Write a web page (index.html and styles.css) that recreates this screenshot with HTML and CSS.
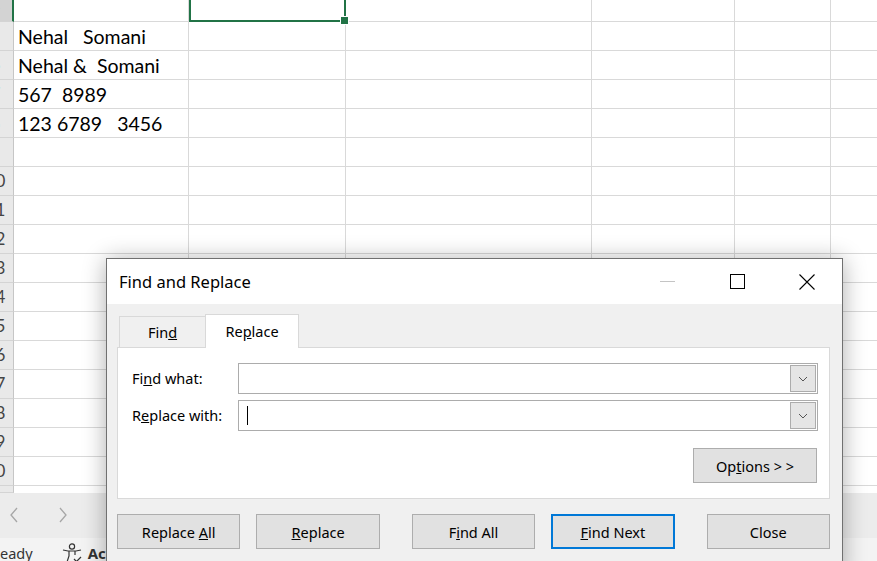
FILE: index.html
```html
<!DOCTYPE html>
<html lang="en">
<head>
    <meta charset="UTF-8" />
    <title>Find and Replace</title>
    <link rel="stylesheet" href="styles.css">
</head>
<body>
    <div class="sheet">
        <div class="row selected">
            <div class="rh">4</div><div class="c col-a"></div><div class="c col-b active-cell"></div><div class="c col-c"></div><div class="c col-d"></div><div class="c col-e"></div><div class="c col-f"></div>
        </div>
        <div class="row">
            <div class="rh">5</div><div class="c col-a">Nehal   Somani</div><div class="c col-b"></div><div class="c col-c"></div><div class="c col-d"></div><div class="c col-e"></div><div class="c col-f"></div>
        </div>
        <div class="row">
            <div class="rh">6</div><div class="c col-a">Nehal &amp;  Somani</div><div class="c col-b"></div><div class="c col-c"></div><div class="c col-d"></div><div class="c col-e"></div><div class="c col-f"></div>
        </div>
        <div class="row">
            <div class="rh">7</div><div class="c col-a">567  8989</div><div class="c col-b"></div><div class="c col-c"></div><div class="c col-d"></div><div class="c col-e"></div><div class="c col-f"></div>
        </div>
        <div class="row">
            <div class="rh">8</div><div class="c col-a">123 6789   3456</div><div class="c col-b"></div><div class="c col-c"></div><div class="c col-d"></div><div class="c col-e"></div><div class="c col-f"></div>
        </div>
        <div class="row">
            <div class="rh">9</div><div class="c col-a"></div><div class="c col-b"></div><div class="c col-c"></div><div class="c col-d"></div><div class="c col-e"></div><div class="c col-f"></div>
        </div>
        <div class="row">
            <div class="rh">10</div><div class="c col-a"></div><div class="c col-b"></div><div class="c col-c"></div><div class="c col-d"></div><div class="c col-e"></div><div class="c col-f"></div>
        </div>
        <div class="row">
            <div class="rh">11</div><div class="c col-a"></div><div class="c col-b"></div><div class="c col-c"></div><div class="c col-d"></div><div class="c col-e"></div><div class="c col-f"></div>
        </div>
        <div class="row">
            <div class="rh">12</div><div class="c col-a"></div><div class="c col-b"></div><div class="c col-c"></div><div class="c col-d"></div><div class="c col-e"></div><div class="c col-f"></div>
        </div>
        <div class="row">
            <div class="rh">13</div><div class="c col-a"></div><div class="c col-b"></div><div class="c col-c"></div><div class="c col-d"></div><div class="c col-e"></div><div class="c col-f"></div>
        </div>
        <div class="row">
            <div class="rh">14</div><div class="c col-a"></div><div class="c col-b"></div><div class="c col-c"></div><div class="c col-d"></div><div class="c col-e"></div><div class="c col-f"></div>
        </div>
        <div class="row">
            <div class="rh">15</div><div class="c col-a"></div><div class="c col-b"></div><div class="c col-c"></div><div class="c col-d"></div><div class="c col-e"></div><div class="c col-f"></div>
        </div>
        <div class="row">
            <div class="rh">16</div><div class="c col-a"></div><div class="c col-b"></div><div class="c col-c"></div><div class="c col-d"></div><div class="c col-e"></div><div class="c col-f"></div>
        </div>
        <div class="row">
            <div class="rh">17</div><div class="c col-a"></div><div class="c col-b"></div><div class="c col-c"></div><div class="c col-d"></div><div class="c col-e"></div><div class="c col-f"></div>
        </div>
        <div class="row">
            <div class="rh">18</div><div class="c col-a"></div><div class="c col-b"></div><div class="c col-c"></div><div class="c col-d"></div><div class="c col-e"></div><div class="c col-f"></div>
        </div>
        <div class="row">
            <div class="rh">19</div><div class="c col-a"></div><div class="c col-b"></div><div class="c col-c"></div><div class="c col-d"></div><div class="c col-e"></div><div class="c col-f"></div>
        </div>
        <div class="row">
            <div class="rh">20</div><div class="c col-a"></div><div class="c col-b"></div><div class="c col-c"></div><div class="c col-d"></div><div class="c col-e"></div><div class="c col-f"></div>
        </div>
        <div class="row partial">
            <div class="rh">21</div><div class="c col-a"></div><div class="c col-b"></div><div class="c col-c"></div><div class="c col-d"></div><div class="c col-e"></div><div class="c col-f"></div>
        </div>
    </div>

    <div class="sheet-tabs">
        <svg class="nav-arrow" width="10" height="16" viewBox="0 0 10 16"><path d="M8 1 L2 8 L8 15" fill="none" stroke="#a6a6a6" stroke-width="1.3"/></svg>
        <svg class="nav-arrow" width="10" height="16" viewBox="0 0 10 16"><path d="M2 1 L8 8 L2 15" fill="none" stroke="#a6a6a6" stroke-width="1.3"/></svg>
    </div>

    <div class="status-bar">
        <span class="status-text">Ready</span>
        <svg class="a11y-icon" width="22" height="20" viewBox="0 0 22 20">
            <circle cx="11" cy="3.5" r="2.6" fill="none" stroke="#333" stroke-width="1.2"/>
            <path d="M2 7 L7 8 L15 8 L20 7" fill="none" stroke="#333" stroke-width="1.2"/>
            <path d="M8 8 L8 13 L6 19 M14 8 L14 12" fill="none" stroke="#333" stroke-width="1.2"/>
            <path d="M13 16 L15.5 18.5 L20 14" fill="none" stroke="#333" stroke-width="1.2"/>
        </svg>
        <span class="status-bold">Accessibility: Good to go</span>
    </div>

    <div class="dialog">
        <div class="titlebar">
            <span class="title">Find and Replace</span>
            <div class="controls">
                <div class="ctl"><span class="ctl-min"></span></div>
                <div class="ctl"><span class="ctl-max"></span></div>
                <div class="ctl">
                    <svg width="16" height="16" viewBox="0 0 16 16"><path d="M0.5 0.5 L15.5 15.5 M15.5 0.5 L0.5 15.5" stroke="#000" stroke-width="1.1"/></svg>
                </div>
            </div>
        </div>

        <div class="dialog-body">
            <div class="tabs">
                <div class="tab">Fin<u>d</u></div>
                <div class="tab active">Re<u>p</u>lace</div>
            </div>

            <div class="panel">
                <div class="field">
                    <label class="field-label">Fi<u>n</u>d what:</label>
                    <div class="combo">
                        <span class="combo-text"></span>
                        <span class="drop"><svg width="10" height="6" viewBox="0 0 10 6"><path d="M1 1 L5 5 L9 1" fill="none" stroke="#555" stroke-width="1"/></svg></span>
                    </div>
                </div>
                <div class="field">
                    <label class="field-label">R<u>e</u>place with:</label>
                    <div class="combo">
                        <span class="combo-text"><span class="caret"></span></span>
                        <span class="drop"><svg width="10" height="6" viewBox="0 0 10 6"><path d="M1 1 L5 5 L9 1" fill="none" stroke="#555" stroke-width="1"/></svg></span>
                    </div>
                </div>
                <div class="panel-actions">
                    <button class="btn">Op<u>t</u>ions &gt; &gt;</button>
                </div>
            </div>

            <div class="buttons">
                <button class="btn">Replace <u>A</u>ll</button>
                <button class="btn"><u>R</u>eplace</button>
                <button class="btn wide-gap">F<u>i</u>nd All</button>
                <button class="btn focused"><u>F</u>ind Next</button>
                <button class="btn wide-gap">Close</button>
            </div>
        </div>
    </div>
</body>
</html>
```

FILE: styles.css
```css
* {
    box-sizing: border-box;
    margin: 0;
    padding: 0;
}

body {
    width: 877px;
    height: 561px;
    overflow: hidden;
    background: #ffffff;
    font-family: "Noto Sans", sans-serif;
    position: relative;
}

/* spreadsheet grid */
.sheet {
    margin-top: -7px;
    margin-left: -22px;
}

.row {
    display: flex;
    height: 29px;
}

.row.partial {
    height: 7px;
    overflow: hidden;
}

.rh {
    width: 36px;
    flex-shrink: 0;
    background: #e9e9e9;
    border-right: 1px solid #c6c6c6;
    border-bottom: 1px solid #d4d4d4;
    color: #444;
    font-family: "Lato", sans-serif;
    font-size: 17px;
    text-align: center;
    line-height: 28px;
}

.row.selected .rh {
    background: #d3d3d3;
    border-right: 2px solid #217346;
}

.c {
    flex-shrink: 0;
    height: 29px;
    border-right: 1px solid #d9d9d9;
    border-bottom: 1px solid #d9d9d9;
    font-family: "Lato", sans-serif;
    font-size: 19.5px;
    color: #000;
    white-space: pre;
    padding: 0 0 0 4px;
    display: flex;
    align-items: flex-end;
    line-height: 26px;
}

.col-a { width: 175px; }
.col-b { width: 157px; }
.col-c { width: 246px; }
.col-d { width: 143px; }
.col-e { width: 96px; }
.col-f { flex-grow: 1; border-right: none; }

.active-cell {
    position: relative;
    border: 2px solid #217346;
    border-top: none;
}

.active-cell::after {
    content: "";
    position: absolute;
    right: -5px;
    bottom: -5px;
    width: 7px;
    height: 7px;
    background: #217346;
    border: 1px solid #fff;
}

/* bottom bars */
.sheet-tabs {
    height: 45px;
    background: #ececec;
    display: flex;
    align-items: center;
    gap: 39px;
    padding-left: 9px;
    padding-bottom: 2px;
}

.status-bar {
    height: 24px;
    background: #f3f3f3;
    display: flex;
    align-items: center;
    font-family: "Noto Sans", sans-serif;
    font-size: 14.5px;
    color: #333;
    padding-top: 6px;
}

.status-text {
    margin-left: -9px;
}

.a11y-icon {
    margin-left: 28px;
}

.status-bold {
    margin-left: 5px;
    font-weight: bold;
    font-size: 15px;
}

/* dialog */
.dialog {
    position: absolute;
    left: 106px;
    top: 258px;
    width: 737px;
    height: 320px;
    background: #f0f0f0;
    border: 1px solid #707070;
    box-shadow: 0 2px 22px rgba(0, 0, 0, 0.32);
    font-size: 14.5px;
    color: #000;
}

.titlebar {
    height: 45px;
    background: #fff;
    display: flex;
    align-items: center;
    justify-content: space-between;
}

.title {
    padding-left: 12px;
    padding-bottom: 1px;
    font-size: 16.5px;
}

.controls {
    display: flex;
    height: 100%;
}

.ctl {
    width: 70px;
    display: flex;
    align-items: center;
    justify-content: center;
}

.ctl-min {
    width: 15px;
    height: 1px;
    background: #c4c4c4;
}

.ctl-max {
    width: 15px;
    height: 15px;
    border: 1px solid #000;
}

.dialog-body {
    padding: 9px 12px 0 10px;
}

.tabs {
    display: flex;
    align-items: flex-end;
    padding-left: 2px;
    height: 34px;
}

.tab {
    height: 31px;
    width: 86px;
    border: 1px solid #d9d9d9;
    border-right: none;
    border-bottom: none;
    text-align: center;
    line-height: 31px;
}

.tab.active {
    width: 94px;
    height: 34px;
    background: #fff;
    border-right: 1px solid #d9d9d9;
    margin-bottom: -1px;
    position: relative;
    z-index: 1;
    line-height: 33px;
}

.panel {
    background: #fff;
    border: 1px solid #d9d9d9;
    height: 152px;
    padding: 15px 11px 0 14px;
}

.field {
    display: flex;
    align-items: center;
    margin-bottom: 6px;
}

.field-label {
    width: 106px;
    flex-shrink: 0;
    padding-bottom: 2px;
}

.combo {
    flex-grow: 1;
    height: 31px;
    border: 1px solid #acacac;
    display: flex;
    padding: 1px;
}

.combo-text {
    flex-grow: 1;
    display: flex;
    align-items: center;
    padding-left: 7px;
}

.caret {
    width: 1px;
    height: 19px;
    background: #000;
}

.drop {
    width: 26px;
    background: #e5e5e5;
    border: 1px solid #acacac;
    display: flex;
    align-items: center;
    justify-content: center;
}

.panel-actions {
    display: flex;
    justify-content: flex-end;
    padding-top: 11px;
    padding-right: 1px;
}

.btn {
    width: 124px;
    height: 35px;
    background: #e1e1e1;
    border: 1px solid #adadad;
    font-family: "Noto Sans", sans-serif;
    font-size: 14.5px;
    color: #000;
}

.btn.focused {
    border: 2px solid #0078d7;
}

.buttons {
    display: flex;
    gap: 16px;
    padding-top: 15px;
}

.buttons .wide-gap {
    margin-left: 16px;
}
```
